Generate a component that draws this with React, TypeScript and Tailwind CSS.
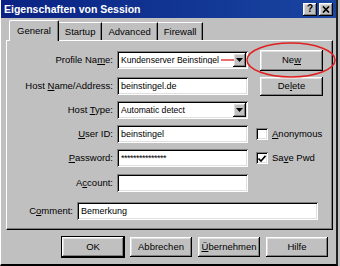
const raised =
  "bg-[#c0c0c0] shadow-[inset_-1px_-1px_#000,inset_1px_1px_#fff,inset_-2px_-2px_#808080,inset_2px_2px_#dfdfdf]";
const sunken =
  "bg-white shadow-[inset_1px_1px_#808080,inset_-1px_-1px_#fff,inset_2px_2px_#000,inset_-2px_-2px_#dfdfdf]";

function U({ children }: { children: string }) {
  return <span className="underline underline-offset-[1px]">{children}</span>;
}

function Label({ w, children }: { w: string; children: React.ReactNode }) {
  return <div className={`${w} shrink-0 text-right pr-[4px] text-black`}>{children}</div>;
}

function Field({ w, value, mono }: { w: string; value?: string; mono?: boolean }) {
  return (
    <div className={`${w} h-[18px] ${sunken} flex items-center px-[4px] text-[9px] ${mono ? "tracking-[-0.5px]" : ""}`}>
      {value}
    </div>
  );
}

function Combo({ value }: { value: string }) {
  return (
    <div className={`w-[131px] h-[18px] ${sunken} flex items-center pl-[4px] pr-[2px] text-[8.6px]`}>
      <span className="flex-1 whitespace-nowrap overflow-hidden">{value}</span>
      <div className={`w-[13px] h-[14px] ${raised} flex items-center justify-center`}>
        <svg width="7" height="4" viewBox="0 0 7 4">
          <path d="M0 0h7L3.5 4z" fill="#000" />
        </svg>
      </div>
    </div>
  );
}

function Check({ checked }: { checked?: boolean }) {
  return (
    <div className={`w-[12px] h-[12px] ${sunken} flex items-center justify-center`}>
      {checked && (
        <svg width="8" height="7" viewBox="0 0 8 7">
          <path d="M0.5 3.5 L3 6 L7.5 0.8" stroke="#000" strokeWidth="1.6" fill="none" />
        </svg>
      )}
    </div>
  );
}

function Btn({ w, h, children, def }: { w: string; h: string; children: React.ReactNode; def?: boolean }) {
  return (
    <div className={`${w} ${h} ${def ? "outline outline-1 outline-black" : ""} ${raised} flex items-center justify-center text-black`}>
      {children}
    </div>
  );
}

export default function App() {
  return (
    <div
      className="relative w-[340px] h-[266px] bg-[#c0c0c0] overflow-hidden text-[9.5px] leading-none"
      style={{ fontFamily: '"Liberation Sans", Arial, sans-serif' }}
    >
      <div className="w-[338px] h-[266px] border-l border-l-white border-r-2 border-r-[#202020] border-b-2 border-b-black">
        {/* title bar */}
        <div className="h-[18px] bg-gradient-to-r from-[#0a2283] to-[#1a45a2] flex items-center pl-[3px] pr-[3px]">
          <span className="flex-1 text-white font-bold text-[10.5px]">Eigenschaften von Session</span>
          <div className={`w-[14px] h-[13px] ${raised} flex items-center justify-center font-bold text-[10px]`}>?</div>
          <div className={`ml-[2px] w-[14px] h-[13px] ${raised} flex items-center justify-center`}>
            <svg width="8" height="7" viewBox="0 0 8 7">
              <path d="M1 0.5 L7 6.5 M7 0.5 L1 6.5" stroke="#000" strokeWidth="1.7" />
            </svg>
          </div>
        </div>

        {/* tabs */}
        <div className="flex items-end h-[22px] pl-[8px] pt-[2px]">
          <div className="relative z-10 h-[21px] -mb-[1px] px-[7px] bg-[#c0c0c0] border-t border-l border-white border-r border-r-black rounded-t-[2px] shadow-[inset_-1px_0_#808080] flex items-center">
            General
          </div>
          <div className="h-[18px] px-[6px] border-t border-white border-r border-r-black shadow-[inset_-1px_0_#808080] flex items-center">
            Startup
          </div>
          <div className="h-[18px] px-[6px] border-t border-white border-r border-r-black shadow-[inset_-1px_0_#808080] flex items-center">
            Advanced
          </div>
          <div className="h-[18px] px-[6px] border-t border-white border-r border-r-black shadow-[inset_-1px_0_#808080] flex items-center">
            Firewall
          </div>
        </div>

        {/* panel */}
        <div className="ml-[5px] w-[327px] h-[190px] border-t border-l border-white border-r border-b border-r-black border-b-black shadow-[inset_-1px_-1px_#808080] pt-[10px] flex flex-col">
          <div className="flex items-center h-[18px]">
            <Label w="w-[110px]">
              Profile Na<U>m</U>e:
            </Label>
            <Combo value="Kundenserver Beinstingel" />
            <div className="ml-[12px]">
              <Btn w="w-[63px]" h="h-[21px]">
                Ne<U>w</U>
              </Btn>
            </div>
          </div>
          <div className="flex items-center h-[18px] mt-[8px]">
            <Label w="w-[110px]">
              Host <U>N</U>ame/Address:
            </Label>
            <Field w="w-[131px]" value="beinstingel.de" />
            <div className="ml-[12px]">
              <Btn w="w-[63px]" h="h-[19px]">
                De<U>l</U>ete
              </Btn>
            </div>
          </div>
          <div className="flex items-center h-[18px] mt-[6px]">
            <Label w="w-[110px]">
              Host <U>T</U>ype:
            </Label>
            <Combo value="Automatic detect" />
          </div>
          <div className="flex items-center h-[18px] mt-[6px]">
            <Label w="w-[110px]">
              <U>U</U>ser ID:
            </Label>
            <Field w="w-[131px]" value="beinstingel" />
            <div className="ml-[8px] flex items-center gap-[4px]">
              <Check />
              <span>
                <U>A</U>nonymous
              </span>
            </div>
          </div>
          <div className="flex items-center h-[18px] mt-[6px]">
            <Label w="w-[110px]">
              <U>P</U>assword:
            </Label>
            <Field w="w-[131px]" value="***************" mono />
            <div className="ml-[8px] flex items-center gap-[4px]">
              <Check checked />
              <span>
                Sa<U>v</U>e Pwd
              </span>
            </div>
          </div>
          <div className="flex items-center h-[18px] mt-[7px]">
            <Label w="w-[110px]">
              A<U>c</U>count:
            </Label>
            <Field w="w-[131px]" />
          </div>
          <div className="flex items-center h-[18px] mt-[10px]">
            <Label w="w-[70px]">
              C<U>o</U>mment:
            </Label>
            <Field w="w-[241px]" value="Bemerkung" />
          </div>
        </div>

        {/* bottom buttons */}
        <div className="flex justify-end gap-[6px] pr-[8px] mt-[7px]">
          <Btn w="w-[62px]" h="h-[20px]" def>
            OK
          </Btn>
          <Btn w="w-[62px]" h="h-[20px]">
            Abbrechen
          </Btn>
          <Btn w="w-[62px]" h="h-[20px]">
            <span>
              <U>Ü</U>bernehmen
            </span>
          </Btn>
          <Btn w="w-[62px]" h="h-[20px]">
            Hilfe
          </Btn>
        </div>
      </div>

      {/* red annotation */}
      <svg className="absolute left-0 top-0 pointer-events-none" width="340" height="266">
        <ellipse cx="291" cy="60" rx="44" ry="17" fill="none" stroke="#e02020" strokeWidth="1.5" />
        <path d="M221 60 H234" stroke="#e02020" strokeWidth="1.3" />
      </svg>
    </div>
  );
}
